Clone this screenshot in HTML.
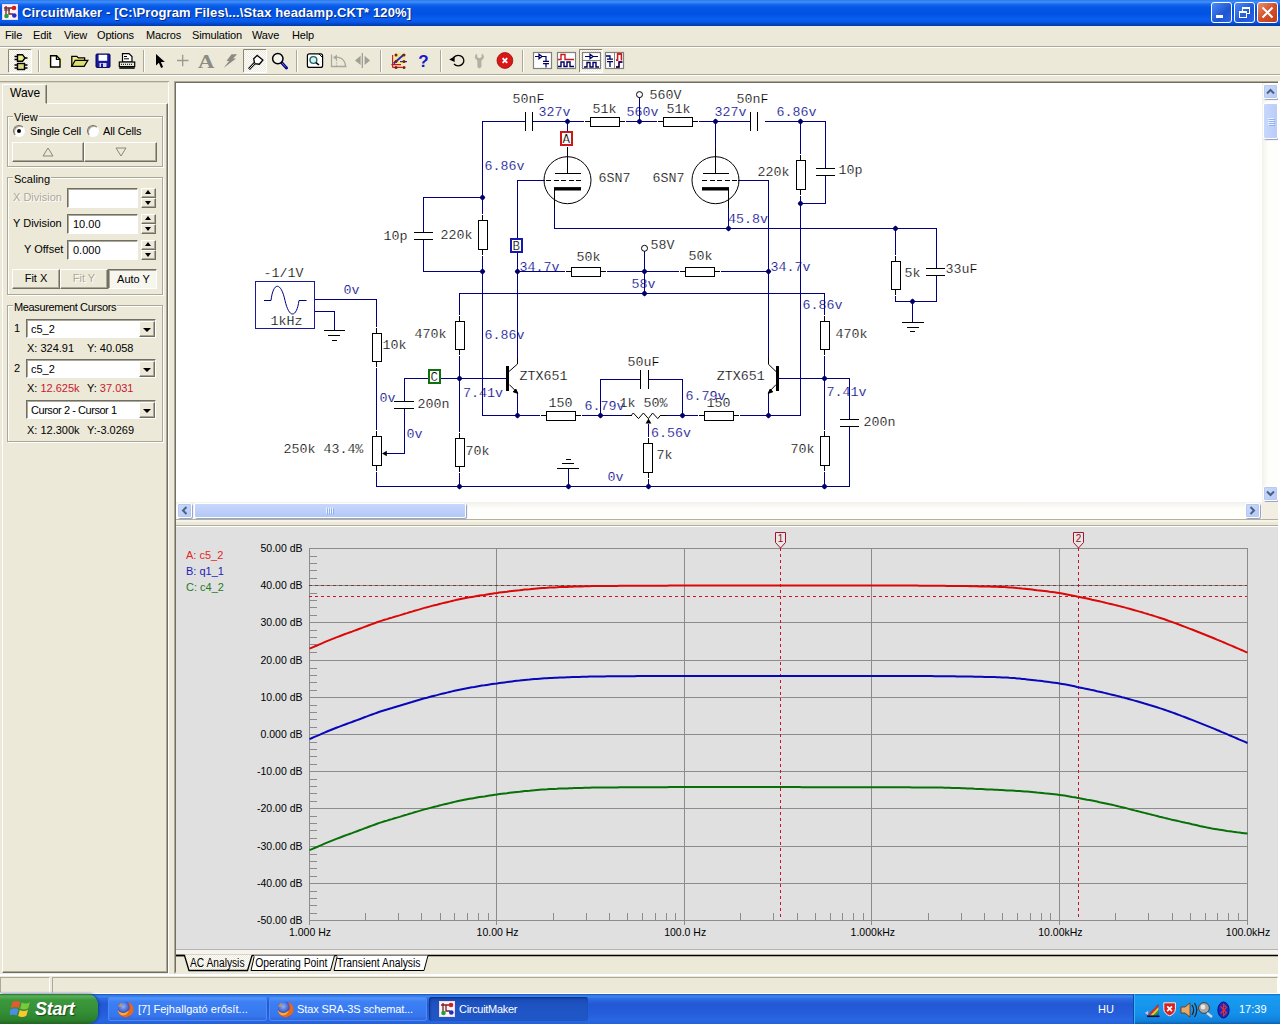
<!DOCTYPE html>
<html><head><meta charset="utf-8"><title>CircuitMaker</title>
<style>
*{box-sizing:border-box;margin:0;padding:0}
html,body{width:1280px;height:1024px;overflow:hidden;background:#ECE9D8;font-family:"Liberation Sans",sans-serif;font-size:11px;color:#000}
.abs{position:absolute}
#title{left:0;top:0;width:1280px;height:26px;background:linear-gradient(#2C78EE 0,#4090F8 2px,#1C6CEE 4px,#0558E6 7px,#0052E2 14px,#0C5EEE 19px,#0858E6 22px,#0346C4 24px,#023CA4 26px)}
#title .t{left:22px;top:5px;line-height:16px;font-weight:bold;font-size:13px;color:#fff;white-space:nowrap;text-shadow:1px 1px 0 #0A2A80;letter-spacing:.13px}
.cap{top:2px;width:21px;height:21px;border:1px solid #fff;border-radius:3px;background:linear-gradient(135deg,#4C8BF5,#1E55D4 60%,#2A66E4)}
#menu span{position:absolute;top:3px;font-size:11px;white-space:nowrap;letter-spacing:-.15px}
.sep{top:50px;width:2px;height:22px;border-left:1px solid #ACA899;border-right:1px solid #fff}
.tbp{top:49px;height:24px;background:#F6F5EE;border:1px solid;border-color:#8A8776 #fff #fff #8A8776}
.grp{border:1px solid #fff;box-shadow:-1px -1px 0 #ACA899, inset -1px -1px 0 #ACA899, inset 1px 1px 0 #fff, 1px 1px 0 #fff;border:0}
.grp{border:1px solid #ACA899;box-shadow:1px 1px 0 #fff, inset 1px 1px 0 #fff}
.lbl{position:absolute;white-space:nowrap;background:#ECE9D8;line-height:13px}
.txt{position:absolute;white-space:nowrap;line-height:13px}
.btn{position:absolute;background:#ECE9D8;border:1px solid;border-color:#fff #716F64 #716F64 #fff;box-shadow:inset -1px -1px 0 #ACA899;text-align:center;line-height:17px}
.inp{position:absolute;background:#fff;border:1px solid;border-color:#716F64 #fff #fff #716F64;box-shadow:inset 1px 1px 0 #ACA899}
.spin{position:absolute;width:15px}
.spin i{position:absolute;left:0;width:15px;height:10px;background:#ECE9D8;border:1px solid;border-color:#fff #716F64 #716F64 #fff;box-shadow:inset -1px -1px 0 #ACA899}
.spin i:after{content:"";position:absolute;left:3px;top:2px;border:3.5px solid transparent}
.spin i.u:after{border-bottom:4px solid #000;top:-2px}
.spin i.d:after{border-top:4px solid #000;top:2px}
.dd{position:absolute;width:16px;background:#ECE9D8;border:1px solid;border-color:#fff #716F64 #716F64 #fff;box-shadow:inset -1px -1px 0 #ACA899}
.dd:after{content:"";position:absolute;left:3px;top:6px;border:4px solid transparent;border-top:4px solid #000}
.tk{position:absolute;top:997px;height:24px;border-radius:3px;color:#fff;font-size:11px;line-height:24px;white-space:nowrap}

.sbtn{position:absolute;width:15px;height:15px;background:linear-gradient(135deg,#CADAFC,#B6CAF6);border:1px solid #fff;border-radius:2px;box-shadow:0 0 0 1px #B8C8EE inset, 1px 1px 1px #8E9CC0}
.thumb{position:absolute;background:linear-gradient(90deg,#C8D8FC,#BACCF8);border:1px solid #fff;border-radius:2px;box-shadow:1px 1px 1px #8E9CC0}
.thumbh{position:absolute;background:linear-gradient(#C8D8FC,#B4C8F6);border:1px solid #fff;border-radius:2px;box-shadow:1px 1px 1px #8E9CC0}
#left>.txt,#left>.lbl{margin-top:1px}
</style></head><body>
<!-- TITLE BAR -->
<div id="title" class="abs">
<svg class="abs" style="left:2px;top:4px" width="16" height="16" viewBox="0 0 16 16"><rect width="16" height="16" fill="#F4D8EC"/><rect x="1" y="1" width="14" height="14" fill="#fff" opacity=".7"/><path d="M2 4h8M4 2v9M7 4v6h4" stroke="#802020" stroke-width="1.3" fill="none"/><path d="M2 6h6" stroke="#404040" stroke-width="1"/><circle cx="12" cy="4" r="2.3" fill="#D02020"/><circle cx="12.3" cy="11.5" r="2.3" fill="#2030C0"/><circle cx="4.5" cy="12" r="2.3" fill="#20A040"/></svg>
<div class="abs t">CircuitMaker - [C:\Program Files\...\Stax headamp.CKT* 120%]</div>
<div class="abs cap" style="left:1211px"><div class="abs" style="left:4px;top:12px;width:7px;height:3px;background:#fff"></div></div>
<div class="abs cap" style="left:1234px"><div class="abs" style="left:7px;top:4px;width:8px;height:7px;border:1px solid #fff;border-top-width:2px"></div><div class="abs" style="left:4px;top:8px;width:8px;height:7px;border:1px solid #fff;border-top-width:2px;background:#2A62DC"></div></div>
<div class="abs cap" style="left:1257px;background:linear-gradient(135deg,#E8906C,#D4502C 50%,#C03A18)"><svg class="abs" style="left:0;top:0" width="19" height="19"><path d="M4.500 4.500l10 10M14.500 4.500l-10 10" stroke="#fff" stroke-width="2"/></svg></div>
</div>
<!-- MENU -->
<div id="menu" class="abs" style="left:0;top:26px;width:1280px;height:20px">
<span style="left:5px">File</span><span style="left:33px">Edit</span><span style="left:64px">View</span><span style="left:97px">Options</span><span style="left:146px">Macros</span><span style="left:192px">Simulation</span><span style="left:252px">Wave</span><span style="left:292px">Help</span>
</div>
<div class="abs" style="left:0;top:46px;width:1280px;height:1px;background:#ACA899"></div>
<div class="abs" style="left:0;top:47px;width:1280px;height:1px;background:#fff"></div>
<!-- TOOLBAR -->
<div id="toolbar"><svg class="abs" style="left:0;top:47px" width="640" height="27" viewBox="0 47 640 27" shape-rendering="auto">
<defs><pattern id="dith" width="2" height="2" patternUnits="userSpaceOnUse"><rect width="2" height="2" fill="#fff"/><rect width="1" height="1" fill="#ECE9D8"/><rect x="1" y="1" width="1" height="1" fill="#ECE9D8"/></pattern></defs>
<!-- pressed backgrounds -->
<g stroke-width="1">
<rect x="8.5" y="49.5" width="23" height="23" fill="url(#dith)" stroke="none"/><path d="M8.5 72.5V49.5H31.5" stroke="#8A8776" fill="none"/><path d="M31.5 49.5V72.5H8.5" stroke="#fff" fill="none"/>
<rect x="243.5" y="49.5" width="23" height="23" fill="url(#dith)" stroke="none"/><path d="M243.5 72.5V49.5H266.5" stroke="#8A8776" fill="none"/><path d="M266.5 49.5V72.5H243.5" stroke="#fff" fill="none"/>
<rect x="579.5" y="49.5" width="23" height="23" fill="url(#dith)" stroke="none"/><path d="M579.5 72.5V49.5H602.5" stroke="#8A8776" fill="none"/><path d="M602.5 49.5V72.5H579.5" stroke="#fff" fill="none"/>
</g>
<!-- separators -->
<g><path d="M38.5 50v22M143.5 50v22M296.5 50v22M380.5 50v22M440.5 50v22M522.5 50v22" stroke="#ACA899"/><path d="M39.5 50v22M144.5 50v22M297.5 50v22M381.5 50v22M441.5 50v22M523.5 50v22" stroke="#fff"/></g>
<!-- icon1: gate + IC -->
<g stroke="#000" stroke-width="1.4" fill="#EEEE88"><path d="M14.5 56.5h3M14.5 59.5h3M24 58h3.5M14.5 65h3M14.5 68h3M24.5 65h3M24.5 68h3"/><path d="M17.5 54.7h5l2.5 3.3l-2.5 3.2h-5z"/><rect x="17.5" y="63.5" width="7" height="6" fill="#DDDD88"/></g>
<!-- new -->
<g><circle cx="55" cy="61" r="7.5" fill="#F4F48A" opacity=".55"/><path d="M50.6 55.8h6l3.4 3.4v7.8h-9.4z" fill="#fff" stroke="#000" stroke-width="1.4"/><path d="M56.4 55.8v3.6h3.6" fill="none" stroke="#000" stroke-width="1.2"/></g>
<!-- open -->
<g stroke="#000" stroke-width="1.3"><path d="M71.8 66.3v-10h5l1.5 1.6h6.3v2.6" fill="#EEEE88"/><path d="M71.8 66.3l3.4-6h12.6l-3.6 6z" fill="#DDDD70"/></g>
<!-- save -->
<g><rect x="96" y="54" width="14" height="13.4" rx="1" fill="#1A1A9C" stroke="#000060" stroke-width="1"/><rect x="98.6" y="54.8" width="8.6" height="6" fill="#fff"/><rect x="99.5" y="63" width="7" height="4" fill="#D8D8E8"/><rect x="101" y="63.6" width="2" height="3.4" fill="#1A1A9C"/></g>
<!-- print -->
<g stroke="#000" stroke-width="1.2"><path d="M122.5 62v-8.4h6.5l3 3v5.4z" fill="#fff"/><rect x="119.3" y="62" width="15.4" height="4.6" fill="#E8E8D8"/><path d="M119.3 68h15.4" stroke-width="1.6"/><path d="M124 56.5h3M124 58.8h5" stroke-width="1"/><path d="M121 64.3h12" stroke-dasharray="1 1" stroke-width="1"/></g>
<!-- arrow -->
<path d="M156 54v11.6l2.9-2.8l2.2 5.2l2-.9l-2.2-5h4z" fill="#000"/>
<!-- plus -->
<path d="M177 60.5h11.5M182.7 54.8v11.4" stroke="#9A9A92" stroke-width="1.3"/>
<!-- A -->
<text transform="translate(198,67.5) scale(1.16,1)" font-family="Liberation Serif,serif" font-size="19.5" fill="#8C8C84" font-weight="bold">A</text>
<!-- lightning -->
<path d="M231.5 54.2h5.6l-4 4.2h3l-12.6 9.6l5.6-7h-2.6z" fill="#8C8C84"/>
<!-- probe -->
<g stroke="#000" stroke-width="1.3" fill="#fff"><path d="M257.3 55.4l5.6 4.6l-3.6 4.2l-4.6-.6l-1-4.8z"/><path d="M254.6 63.2l-5.6 6" stroke-width="2.6"/><path d="M254.4 63.4l-5 5.4" stroke="#fff" stroke-width=".9"/></g>
<!-- magnifier -->
<g><path d="M281.5 62.5l5 5.4" stroke="#000080" stroke-width="3" stroke-linecap="round"/><path d="M282 63l4 4.4" stroke="#6A6AE0" stroke-width="1"/><circle cx="277.8" cy="58.6" r="5.2" fill="#F4F4EC" stroke="#000" stroke-width="1.5"/></g>
<!-- zoom fit -->
<g><rect x="307.4" y="53.8" width="15.2" height="13.6" rx="2" fill="#fff" stroke="#000" stroke-width="1.2"/><path d="M319 54l3.4 3.4" stroke="#000" stroke-width="1"/><circle cx="313.4" cy="60" r="3.4" fill="#D8F0F0" stroke="#206868" stroke-width="1.4"/><path d="M316 62.6l3 2.4" stroke="#000" stroke-width="1.6"/></g>
<!-- rotate gray -->
<g stroke="#A8A89C" fill="none" stroke-width="1.3"><path d="M331.5 54.5v12h15"/><path d="M334 57.5c6 -1.5 11 2 11.5 8.6"/><path d="M333 57.6l4-3v5.6z" fill="#A8A89C" stroke="none"/><path d="M336.5 60v6" stroke-dasharray="1 1.4"/></g>
<!-- mirror gray -->
<g fill="#A0A096"><path d="M355 60.4l5.6-4.6v9.2z"/><path d="M370 60.4l-5.4-4.6v9.2z"/><rect x="361.7" y="53" width="1.3" height="15"/></g>
<!-- netlist -->
<g><circle cx="399" cy="59" r="6.5" fill="#F8E870" opacity=".6"/><path d="M392.6 55v12.4M391.4 64.6h9.6M392.6 67.4h10" stroke="#C81818" stroke-width="1.1" fill="none"/><path d="M393.6 63.4l10-8.6" stroke="#2828D0" stroke-width="2"/><path d="M400 61.6h7" stroke="#2828D0" stroke-width="1.2"/><g fill="#802000"><circle cx="396" cy="55" r="1.5"/><circle cx="404" cy="55" r="1.5"/><circle cx="396" cy="61.4" r="1.5"/><circle cx="404" cy="61.6" r="1.5"/><circle cx="396" cy="67.4" r="1.5"/><circle cx="404" cy="67.4" r="1.5"/></g></g>
<!-- ? -->
<text x="418.3" y="67" font-family="Liberation Sans,sans-serif" font-size="17" font-weight="bold" fill="#1818C8">?</text>
<!-- reset -->
<g><path d="M452.8 59.4a5.6 5.2 0 1 1 1.2 4.6" fill="none" stroke="#000" stroke-width="1.3"/><path d="M449.2 59.6l5.4-3v5.4z" fill="#000"/></g>
<!-- wrench gray -->
<g fill="#B0B0A4"><path d="M475.6 54.2l1.6 0v3l2.2 1l2.2-1v-3h1.6l.8 3.6l-2.6 3v6.2l-2 1.6l-2-1.6v-6.2l-2.6-3z"/></g>
<!-- stop -->
<g><circle cx="504.9" cy="60.5" r="7.9" fill="#D81818"/><circle cx="504.9" cy="60.5" r="7.9" fill="none" stroke="#A00808" stroke-width=".8"/><path d="M502.6 58.2l4.6 4.6M507.2 58.2l-4.6 4.6" stroke="#fff" stroke-width="1.9"/></g>
<!-- analysis icons -->
<g stroke-width="1.2" fill="none">
<rect x="533.5" y="52.5" width="18" height="16" fill="#fff" stroke="#808080"/><path d="M535 56.5h4M539 54.3v4.4l3-2.2zM542 56.5h4v5M543 61.3h6M543 63.6h6M546 63.6v4" stroke="#000060"/>
<rect x="557.5" y="52.5" width="18" height="16" fill="#fff" stroke="#808080"/><path d="M558 59.5h3v-5h4v5h9" stroke="#D01818" stroke-width="1.4"/><path d="M558 66.5h3v-4.5h3v4.5h3v-4.5h3v4.5h4" stroke="#000060" stroke-width="1.4"/>
<rect x="582.5" y="52.5" width="18" height="16" fill="#fff" stroke="#808080"/><path d="M582.5 60.5h18" stroke="#808080" stroke-width="1"/><path d="M585 56.5h5M590 54.3v4.4l3-2.2zM593 56.5h5" stroke="#000060"/><path d="M584 67h3v-4.5h3v4.5h3v-4.5h3v4.5h3" stroke="#000060" stroke-width="1.4"/>
<rect x="605.5" y="52.5" width="18" height="16" fill="#fff" stroke="#808080"/><path d="M614.5 52.5v16" stroke="#808080" stroke-width="1"/><path d="M606 56h4v3M607 59.2h6M607 61.6h6M610 61.6v5.5" stroke="#000060" stroke-width="1.3"/><path d="M616 60h1.5v-6h4v6M616 67h3v-5h3" stroke="#D01818" stroke-width="1.3"/><path d="M616 67h3v-5h3.5" stroke="#000060" stroke-width="1.3"/><path d="M616 60.4h1.6v-6.4h3.8v6.4" stroke="#D01818" stroke-width="1.3"/>
</g>
</svg>
</div>
<div class="abs" style="left:0;top:74px;width:1280px;height:1px;background:#ACA899"></div>
<div class="abs" style="left:0;top:75px;width:1280px;height:1px;background:#fff"></div>
<!-- LEFT PANEL -->
<div id="left"><div class="abs" style="left:0;top:81px;width:169px;height:1px;background:#A8A490"></div><div class="abs" style="left:0;top:82px;width:168px;height:1px;background:#D8D4C4"></div>
<div class="abs" style="left:168px;top:82px;width:1px;height:892px;background:#fff"></div>


<div class="abs" style="left:2px;top:103px;width:166px;height:870px;border:1px solid;border-color:#fff #716F64 #716F64 #fff;box-shadow:inset -1px -1px 0 #ACA899"></div>
<div class="abs" style="left:2px;top:84px;width:45px;height:20px;background:#ECE9D8;border:1px solid;border-color:#fff #716F64 #ECE9D8 #fff;box-shadow:inset -1px 0 0 #ACA899;border-radius:2px 2px 0 0"></div>
<div class="txt" style="left:10px;top:86px;font-size:12px">Wave</div>
<!-- View group -->
<div class="abs grp" style="left:7px;top:116px;width:156px;height:51px"></div>
<div class="lbl" style="left:13px;top:110px;padding:0 1px">View</div>
<div class="abs" style="left:13px;top:125px;width:12px;height:12px;border-radius:50%;background:#fff;border:1px solid;border-color:#716F64 #fff #fff #716F64;box-shadow:inset 1px 1px 0 #ACA899"></div>
<div class="abs" style="left:17px;top:129px;width:4px;height:4px;border-radius:50%;background:#000"></div>
<div class="txt" style="left:30px;top:124px;letter-spacing:-.15px">Single Cell</div>
<div class="abs" style="left:87px;top:125px;width:12px;height:12px;border-radius:50%;background:#fff;border:1px solid;border-color:#716F64 #fff #fff #716F64;box-shadow:inset 1px 1px 0 #ACA899"></div>
<div class="txt" style="left:103px;top:124px;letter-spacing:-.15px">All Cells</div>
<div class="btn" style="left:12px;top:142px;width:72px;height:20px"><svg width="12" height="10" style="margin-top:4px"><path d="M1 9L6 1l5 8z" fill="none" stroke="#8A8776"/></svg></div>
<div class="btn" style="left:84px;top:142px;width:73px;height:20px"><svg width="12" height="10" style="margin-top:4px"><path d="M1 1L6 9l5-8z" fill="none" stroke="#8A8776"/></svg></div>
<!-- Scaling group -->
<div class="abs grp" style="left:7px;top:177px;width:156px;height:118px"></div>
<div class="lbl" style="left:13px;top:172px;padding:0 1px">Scaling</div>
<div class="txt" style="left:13px;top:190px;color:#ACA899;text-shadow:1px 1px 0 #fff">X Division</div>
<div class="inp" style="left:67px;top:188px;width:71px;height:20px"></div>
<div class="spin" style="left:141px;top:188px"><i class="u" style="top:0"></i><i class="d" style="top:10px"></i></div>
<div class="txt" style="left:13px;top:216px">Y Division</div>
<div class="inp" style="left:67px;top:214px;width:71px;height:20px"><div class="txt" style="left:5px;top:3px">10.00</div></div>
<div class="spin" style="left:141px;top:214px"><i class="u" style="top:0"></i><i class="d" style="top:10px"></i></div>
<div class="txt" style="left:24px;top:242px">Y Offset</div>
<div class="inp" style="left:67px;top:240px;width:71px;height:20px"><div class="txt" style="left:5px;top:3px">0.000</div></div>
<div class="spin" style="left:141px;top:240px"><i class="u" style="top:0"></i><i class="d" style="top:10px"></i></div>
<div class="btn" style="left:12px;top:269px;width:48px;height:20px">Fit X</div>
<div class="btn" style="left:60px;top:269px;width:48px;height:20px;color:#ACA899;text-shadow:1px 1px 0 #fff">Fit Y</div>
<div class="btn" style="left:108px;top:269px;width:49px;height:20px;background:#F6F5EE;border-color:#716F64 #fff #fff #716F64;box-shadow:inset 1px 1px 0 #ACA899;line-height:19px;padding-left:2px">Auto Y</div>
<!-- Measurement Cursors -->
<div class="abs grp" style="left:7px;top:305px;width:156px;height:137px"></div>
<div class="lbl" style="left:13px;top:300px;padding:0 1px;letter-spacing:-.35px">Measurement Cursors</div>
<div class="txt" style="left:14px;top:321px">1</div>
<div class="inp" style="left:26px;top:319px;width:130px;height:19px"><div class="txt" style="left:4px;top:3px">c5_2</div><div class="dd" style="left:112px;top:1px;height:16px"></div></div>
<div class="txt" style="left:27px;top:341px">X: 324.91</div><div class="txt" style="left:87px;top:341px">Y: 40.058</div>
<div class="txt" style="left:14px;top:361px">2</div>
<div class="inp" style="left:26px;top:359px;width:130px;height:19px"><div class="txt" style="left:4px;top:3px">c5_2</div><div class="dd" style="left:112px;top:1px;height:16px"></div></div>
<div class="txt" style="left:27px;top:381px">X: <span style="color:#C81830">12.625k</span></div><div class="txt" style="left:87px;top:381px">Y: <span style="color:#C81830">37.031</span></div>
<div class="inp" style="left:26px;top:400px;width:130px;height:19px"><div class="txt" style="left:4px;top:3px;letter-spacing:-.45px">Cursor 2 - Cursor 1</div><div class="dd" style="left:112px;top:1px;height:16px"></div></div>
<div class="txt" style="left:27px;top:423px">X: 12.300k</div><div class="txt" style="left:87px;top:423px">Y:-3.0269</div>
</div>
<!-- SCHEMATIC -->
<div id="schem">
<div class="abs" style="left:174px;top:81px;width:1106px;height:893px;border:1px solid;border-color:#ACA899 #fff #ECE9D8 #ACA899"></div>
<div class="abs" style="left:175px;top:82px;width:1104px;height:891px;border:1px solid;border-color:#716F64 #ECE9D8 #ECE9D8 #716F64"></div>
<div class="abs" style="left:176px;top:83px;width:1102px;height:436px;background:#fff"></div>
<div class="abs" style="left:176px;top:519px;width:1102px;height:8px;background:linear-gradient(#B4B0A0 0,#B4B0A0 1px,#F8F6EC 1px,#F4F2E6 3px,#ECE9D8 3px,#ECE9D8 6px,#B0AC98 6px,#B0AC98 7px,#fff 7px)"></div>
<!-- vscroll -->
<div class="abs" style="left:1262px;top:83px;width:16px;height:419px;background:linear-gradient(90deg,#F3F1EC,#FEFEFB 40%,#FEFEFB)"></div>
<div class="sbtn" style="left:1263px;top:84px"><svg width="13" height="13"><path d="M3 8.5l3.5-3.5l3.5 3.5" fill="none" stroke="#4D6185" stroke-width="2"/></svg></div>
<div class="thumb" style="left:1263px;top:103px;width:15px;height:36px"><svg width="13" height="34"><path d="M4 14.5h6M4 16.5h6M4 18.5h6M4 20.5h6" stroke="#EEF4FE"/><path d="M5 15.5h6M5 17.5h6M5 19.5h6M5 21.5h6" stroke="#8CB0F8"/></svg></div>
<div class="sbtn" style="left:1263px;top:486px"><svg width="13" height="13"><path d="M3 4.5l3.5 3.5l3.5-3.5" fill="none" stroke="#4D6185" stroke-width="2"/></svg></div>
<!-- hscroll -->
<div class="abs" style="left:176px;top:502px;width:1086px;height:17px;background:linear-gradient(#F3F1EC,#FEFEFB 40%,#FEFEFB)"></div>
<div class="abs" style="left:1262px;top:502px;width:16px;height:17px;background:#F2EFE2"></div>
<div class="sbtn" style="left:177px;top:503px"><svg width="13" height="13"><path d="M8.5 3l-3.5 3.5l3.5 3.5" fill="none" stroke="#4D6185" stroke-width="2"/></svg></div>
<div class="thumbh" style="left:194px;top:503px;width:272px;height:15px"><svg width="270" height="13"><path d="M131.5 3.5v6M133.5 3.5v6M135.5 3.5v6M137.5 3.5v6" stroke="#EEF4FE"/><path d="M132.5 4.5v6M134.5 4.5v6M136.5 4.5v6M138.5 4.5v6" stroke="#8CB0F8"/></svg></div>
<div class="sbtn" style="left:1245px;top:503px"><svg width="13" height="13"><path d="M4.5 3l3.5 3.5l-3.5 3.5" fill="none" stroke="#4D6185" stroke-width="2"/></svg></div>
<svg class="abs" style="left:176px;top:83px" width="1086" height="420" viewBox="176 83 1086 420"><style>.k{font-family:"Liberation Mono",monospace;font-size:13.33px;fill:#000;stroke:#fff;stroke-width:.22px}.v{font-family:"Liberation Mono",monospace;font-size:13.33px;fill:#00008C;stroke:#fff;stroke-width:.2px}</style><text x="512.4" y="103" class="k">50nF</text>
<text x="592.4" y="113" class="k">51k</text>
<text x="649.4" y="99" class="k">560V</text>
<text x="666.4" y="113" class="k">51k</text>
<text x="736.4" y="103" class="k">50nF</text>
<text x="598.4" y="182" class="k">6SN7</text>
<text x="652.4" y="182" class="k">6SN7</text>
<text x="757.4" y="176" class="k">220k</text>
<text x="838.4" y="174" class="k">10p</text>
<text x="383.4" y="240" class="k">10p</text>
<text x="440.4" y="239" class="k">220k</text>
<text x="576.4" y="261" class="k">50k</text>
<text x="650.4" y="249" class="k">58V</text>
<text x="688.4" y="260" class="k">50k</text>
<text x="904.4" y="277" class="k">5k</text>
<text x="945.4" y="273" class="k">33uF</text>
<text x="263.4" y="277" class="k">-1/1V</text>
<text x="270.4" y="325" class="k">1kHz</text>
<text x="382.4" y="349" class="k">10k</text>
<text x="414.4" y="338" class="k">470k</text>
<text x="835.4" y="338" class="k">470k</text>
<text x="519.4" y="380" class="k">ZTX651</text>
<text x="716.8" y="380" class="k">ZTX651</text>
<text x="627.4" y="366" class="k">50uF</text>
<text x="548.4" y="407" class="k">150</text>
<text x="706.4" y="407" class="k">150</text>
<text x="619.4" y="407" class="k">1k 50%</text>
<text x="417.4" y="408" class="k">200n</text>
<text x="863.4" y="426" class="k">200n</text>
<text x="283.4" y="453" class="k">250k 43.4%</text>
<text x="465.4" y="455" class="k">70k</text>
<text x="790.4" y="453" class="k">70k</text>
<text x="656.4" y="459" class="k">7k</text>
<text x="538.4" y="115.5" class="v">327v</text>
<text x="626.4" y="115.5" class="v">560v</text>
<text x="714.4" y="115.5" class="v">327v</text>
<text x="776.4" y="115.5" class="v">6.86v</text>
<text x="484.4" y="169.5" class="v">6.86v</text>
<text x="727.9" y="223" class="v">45.8v</text>
<text x="519.4" y="271" class="v">34.7v</text>
<text x="770.4" y="271.3" class="v">34.7v</text>
<text x="631.4" y="287.5" class="v">58v</text>
<text x="802.4" y="308.6" class="v">6.86v</text>
<text x="484.4" y="338.5" class="v">6.86v</text>
<text x="343.4" y="294" class="v">0v</text>
<text x="379.4" y="402" class="v">0v</text>
<text x="406.4" y="437.6" class="v">0v</text>
<text x="462.9" y="397" class="v">7.41v</text>
<text x="826.4" y="396" class="v">7.41v</text>
<text x="584.4" y="410" class="v">6.79v</text>
<text x="685.4" y="400.3" class="v">6.79v</text>
<text x="650.9" y="437.2" class="v">6.56v</text>
<text x="607.4" y="481.2" class="v">0v</text><g stroke="#000080" stroke-width="1" fill="none" shape-rendering="crispEdges">
<path d="M482 121.5H526"/>
<path d="M533 121.5H591"/>
<path d="M620 121.5H664"/>
<path d="M693 121.5H751"/>
<path d="M765 121.5H826"/>
<path d="M423 197.5H483"/>
<path d="M423 271.5H483"/>
<path d="M517 180.5H545"/>
<path d="M738 180.5H769"/>
<path d="M554 228.5H937"/>
<path d="M517 271.5H572"/>
<path d="M601 271.5H686"/>
<path d="M715 271.5H769"/>
<path d="M459 293.5H825"/>
<path d="M315 299.5H377"/>
<path d="M315 311.5H335"/>
<path d="M404 378.5H429"/>
<path d="M441 378.5H507"/>
<path d="M779 378.5H850"/>
<path d="M482 415.5H546"/>
<path d="M575 415.5H632"/>
<path d="M660 415.5H705"/>
<path d="M734 415.5H801"/>
<path d="M600 379.5H641"/>
<path d="M648 379.5H683"/>
<path d="M386 453.5H405"/>
<path d="M376 486.5H850"/>
<path d="M800 203.5H826"/>
<path d="M895 301.5H937"/>
<path d="M482.5 121V221"/>
<path d="M482.5 250V416"/>
<path d="M423.5 197V233"/>
<path d="M423.5 239V272"/>
<path d="M517.5 180V239"/>
<path d="M517.5 253V359"/>
<path d="M567.5 121V132"/>
<path d="M567.5 147V174"/>
<path d="M554.5 190V229"/>
<path d="M639.5 97V122"/>
<path d="M715.5 121V174"/>
<path d="M728.5 190V229"/>
<path d="M768.5 180V358"/>
<path d="M800.5 121V161"/>
<path d="M800.5 190V416"/>
<path d="M825.5 121V169"/>
<path d="M825.5 175V204"/>
<path d="M644.5 251V294"/>
<path d="M895.5 228V262"/>
<path d="M895.5 290V302"/>
<path d="M936.5 228V269"/>
<path d="M936.5 275V302"/>
<path d="M912.5 301V323"/>
<path d="M824.5 293V322"/>
<path d="M824.5 350V437"/>
<path d="M824.5 466V487"/>
<path d="M849.5 378V420"/>
<path d="M849.5 426V487"/>
<path d="M376.5 299V334"/>
<path d="M376.5 362V436"/>
<path d="M376.5 466V487"/>
<path d="M334.5 311V331"/>
<path d="M404.5 378V402"/>
<path d="M404.5 408V454"/>
<path d="M459.5 293V322"/>
<path d="M459.5 350V439"/>
<path d="M459.5 468V487"/>
<path d="M600.5 379V416"/>
<path d="M682.5 379V416"/>
<path d="M648.5 424V444"/>
<path d="M648.5 473V487"/>
<path d="M568.5 468V487"/>
<path d="M517.5 393V416"/>
<path d="M768.5 393V416"/>
</g>
<g fill="#00006C">
<path d="M567.5 118.6l2.9 2.9l-2.9 2.9l-2.9-2.9z"/><circle cx="567.5" cy="121.5" r="2.2"/>
<path d="M639.5 118.6l2.9 2.9l-2.9 2.9l-2.9-2.9z"/><circle cx="639.5" cy="121.5" r="2.2"/>
<path d="M715.5 118.6l2.9 2.9l-2.9 2.9l-2.9-2.9z"/><circle cx="715.5" cy="121.5" r="2.2"/>
<path d="M800.5 118.6l2.9 2.9l-2.9 2.9l-2.9-2.9z"/><circle cx="800.5" cy="121.5" r="2.2"/>
<path d="M482.5 194.6l2.9 2.9l-2.9 2.9l-2.9-2.9z"/><circle cx="482.5" cy="197.5" r="2.2"/>
<path d="M482.5 268.6l2.9 2.9l-2.9 2.9l-2.9-2.9z"/><circle cx="482.5" cy="271.5" r="2.2"/>
<path d="M517.5 268.6l2.9 2.9l-2.9 2.9l-2.9-2.9z"/><circle cx="517.5" cy="271.5" r="2.2"/>
<path d="M644.5 268.6l2.9 2.9l-2.9 2.9l-2.9-2.9z"/><circle cx="644.5" cy="271.5" r="2.2"/>
<path d="M768.5 268.6l2.9 2.9l-2.9 2.9l-2.9-2.9z"/><circle cx="768.5" cy="271.5" r="2.2"/>
<path d="M728.5 225.6l2.9 2.9l-2.9 2.9l-2.9-2.9z"/><circle cx="728.5" cy="228.5" r="2.2"/>
<path d="M895.5 225.6l2.9 2.9l-2.9 2.9l-2.9-2.9z"/><circle cx="895.5" cy="228.5" r="2.2"/>
<path d="M800.5 200.6l2.9 2.9l-2.9 2.9l-2.9-2.9z"/><circle cx="800.5" cy="203.5" r="2.2"/>
<path d="M912.5 298.6l2.9 2.9l-2.9 2.9l-2.9-2.9z"/><circle cx="912.5" cy="301.5" r="2.2"/>
<path d="M644.5 290.6l2.9 2.9l-2.9 2.9l-2.9-2.9z"/><circle cx="644.5" cy="293.5" r="2.2"/>
<path d="M459.5 375.6l2.9 2.9l-2.9 2.9l-2.9-2.9z"/><circle cx="459.5" cy="378.5" r="2.2"/>
<path d="M824.5 375.6l2.9 2.9l-2.9 2.9l-2.9-2.9z"/><circle cx="824.5" cy="378.5" r="2.2"/>
<path d="M517.5 412.6l2.9 2.9l-2.9 2.9l-2.9-2.9z"/><circle cx="517.5" cy="415.5" r="2.2"/>
<path d="M600.5 412.6l2.9 2.9l-2.9 2.9l-2.9-2.9z"/><circle cx="600.5" cy="415.5" r="2.2"/>
<path d="M682.5 412.6l2.9 2.9l-2.9 2.9l-2.9-2.9z"/><circle cx="682.5" cy="415.5" r="2.2"/>
<path d="M768.5 412.6l2.9 2.9l-2.9 2.9l-2.9-2.9z"/><circle cx="768.5" cy="415.5" r="2.2"/>
<path d="M459.5 483.6l2.9 2.9l-2.9 2.9l-2.9-2.9z"/><circle cx="459.5" cy="486.5" r="2.2"/>
<path d="M568.5 483.6l2.9 2.9l-2.9 2.9l-2.9-2.9z"/><circle cx="568.5" cy="486.5" r="2.2"/>
<path d="M648.5 483.6l2.9 2.9l-2.9 2.9l-2.9-2.9z"/><circle cx="648.5" cy="486.5" r="2.2"/>
<path d="M824.5 483.6l2.9 2.9l-2.9 2.9l-2.9-2.9z"/><circle cx="824.5" cy="486.5" r="2.2"/>
</g>
<g stroke="#000" stroke-width="1" fill="#fff" shape-rendering="crispEdges">
<path d="M585 121.5H590M620 121.5H625" fill="none"/><path d="M584 121.5H585M625 121.5H626" stroke="#fff" fill="none"/><rect x="590.5" y="117.5" width="29" height="9"/>
<path d="M658 121.5H663M693 121.5H698" fill="none"/><path d="M657 121.5H658M698 121.5H699" stroke="#fff" fill="none"/><rect x="663.5" y="117.5" width="29" height="9"/>
<path d="M566 271.5H571M601 271.5H606" fill="none"/><path d="M565 271.5H566M606 271.5H607" stroke="#fff" fill="none"/><rect x="571.5" y="267.5" width="29" height="9"/>
<path d="M680 271.5H685M715 271.5H720" fill="none"/><path d="M679 271.5H680M720 271.5H721" stroke="#fff" fill="none"/><rect x="685.5" y="267.5" width="29" height="9"/>
<path d="M541 415.5H546M576 415.5H581" fill="none"/><path d="M540 415.5H541M581 415.5H582" stroke="#fff" fill="none"/><rect x="546.5" y="411.5" width="29" height="9"/>
<path d="M699 415.5H704M734 415.5H739" fill="none"/><path d="M698 415.5H699M739 415.5H740" stroke="#fff" fill="none"/><rect x="704.5" y="411.5" width="29" height="9"/>
<path d="M482.5 215V220M482.5 250V255" fill="none"/><path d="M482.5 214V215M482.5 255V256" stroke="#fff" fill="none"/><rect x="478.5" y="220.5" width="9" height="29"/>
<path d="M800.5 155V160M800.5 190V195" fill="none"/><path d="M800.5 154V155M800.5 195V196" stroke="#fff" fill="none"/><rect x="796.5" y="160.5" width="9" height="29"/>
<path d="M895.5 256V261M895.5 290V295" fill="none"/><path d="M895.5 255V256M895.5 295V296" stroke="#fff" fill="none"/><rect x="891.5" y="261.5" width="9" height="28"/>
<path d="M459.5 316V321M459.5 350V355" fill="none"/><path d="M459.5 315V316M459.5 355V356" stroke="#fff" fill="none"/><rect x="455.5" y="321.5" width="9" height="28"/>
<path d="M824.5 316V321M824.5 350V355" fill="none"/><path d="M824.5 315V316M824.5 355V356" stroke="#fff" fill="none"/><rect x="820.5" y="321.5" width="9" height="28"/>
<path d="M459.5 433V438M459.5 467V472" fill="none"/><path d="M459.5 432V433M459.5 472V473" stroke="#fff" fill="none"/><rect x="455.5" y="438.5" width="9" height="28"/>
<path d="M824.5 431V436M824.5 466V471" fill="none"/><path d="M824.5 430V431M824.5 471V472" stroke="#fff" fill="none"/><rect x="820.5" y="436.5" width="9" height="29"/>
<path d="M376.5 328V333M376.5 362V367" fill="none"/><path d="M376.5 327V328M376.5 367V368" stroke="#fff" fill="none"/><rect x="372.5" y="333.5" width="9" height="28"/>
<path d="M376.5 431V436M376.5 466V471" fill="none"/><path d="M376.5 430V431M376.5 471V472" stroke="#fff" fill="none"/><rect x="372.5" y="436.5" width="9" height="29"/>
<path d="M648.5 438V443M648.5 473V478" fill="none"/><path d="M648.5 437V438M648.5 478V479" stroke="#fff" fill="none"/><rect x="643.5" y="443.5" width="9" height="29"/>
<path d="M525.5 112V131M532.5 112V131" fill="none"/>
<path d="M750.5 112V131M757.5 112V131" fill="none"/>
<path d="M640.5 370V389M648.5 370V389" fill="none"/>
<path d="M414 232.5H433M414 239.5H433" fill="none"/>
<path d="M816 168.5H835M816 175.5H835" fill="none"/>
<path d="M926 268.5H945M926 275.5H945" fill="none"/>
<path d="M394 401.5H414M394 408.5H414" fill="none"/>
<path d="M840 419.5H859M840 426.5H859" fill="none"/>
<path d="M324 330.5H345M328 335.5H340M332 340.5H337" fill="none"/>
<path d="M902 322.5H924M907 327.5H919M910 331.5H915" fill="none"/>
<path d="M557 468.5H579M562 463.5H574M566 459.5H571" fill="none"/>
</g>
<circle cx="567.5" cy="180.2" r="23.5" fill="none" stroke="#000" stroke-width="1"/><path d="M567.5 148V173.5M554.5 173.5H580.5" stroke="#000" fill="none" shape-rendering="crispEdges"/><path d="M581 180.5H544" stroke="#000" stroke-dasharray="5 2.5" fill="none" shape-rendering="crispEdges"/><path d="M554.5 190V208" stroke="#000" fill="none" shape-rendering="crispEdges"/><path d="M554 188.8H581" stroke="#000" stroke-width="3.4" fill="none"/>
<circle cx="715.5" cy="180.2" r="23.5" fill="none" stroke="#000" stroke-width="1"/><path d="M715.5 148V173.5M702.5 173.5H728.5" stroke="#000" fill="none" shape-rendering="crispEdges"/><path d="M702 180.5H738" stroke="#000" stroke-dasharray="5 2.5" fill="none" shape-rendering="crispEdges"/><path d="M728.5 190V208" stroke="#000" fill="none" shape-rendering="crispEdges"/><path d="M702 188.8H729" stroke="#000" stroke-width="3.4" fill="none"/>
<g stroke="#000" fill="#fff"><circle cx="639.5" cy="94.6" r="3"/><circle cx="644.5" cy="248.3" r="3"/></g>
<g stroke="#000" fill="none"><path d="M507.5 366V391" stroke-width="3"/><path d="M509 371.5L517.5 364V358"/><path d="M509.3 384.6L517.5 392.8"/><path d="M517.8 393.4l-4.6-1.6l2.6-2.8z" fill="#000"/>
<path d="M777.500 366V391" stroke-width="3"/><path d="M776 371.500L768.500 364.300V357"/><path d="M776 384.600L768.500 392.500"/><path d="M768.2 393.4l4.6-1.6l-2.6-2.8z" fill="#000"/></g>
<path d="M625 415.500H631.200L633.300 413L638.500 418.600L643.400 413L648.400 418.600L652.600 413L657.800 418.600L660.300 415.500H666" stroke="#000" fill="none"/>
<path d="M648.500 418.400l-2.900 5.200h5.800z" fill="#000"/>
<path d="M382 453.5l4.800-2.800v5.600z" fill="#000"/>
<rect x="255.5" y="281.5" width="59" height="47" fill="none" stroke="#1A1A9A" shape-rendering="crispEdges"/>
<path d="M264 300.5h7c2.2-19 10-19 14 0c4 18 11.500 18 14 0h7.500" fill="none" stroke="#000080" stroke-width="1"/>
<rect x="561" y="132" width="11" height="13" fill="#fff" stroke="#CC1818" stroke-width="2"/><text x="562.4" y="143" class="k" style="font-size:12.5px">A</text>
<rect x="511" y="239" width="11" height="13" fill="#fff" stroke="#1818B0" stroke-width="2"/><text x="512.4" y="250" class="k" style="font-size:12.5px">B</text>
<rect x="429" y="370" width="11" height="13" fill="#fff" stroke="#107010" stroke-width="2"/><text x="430.4" y="381" class="k" style="font-size:12.5px">C</text></svg></div>
<!-- PLOT -->
<div id="plot">

<svg class="abs" style="left:176px;top:527px" width="1102" height="428" viewBox="176 527 1102 428" font-family="Liberation Sans,sans-serif" font-size="10.5"><rect x="176" y="527" width="1102" height="423" fill="#E0E0E0"/><rect x="176" y="949" width="1102" height="1" fill="#B4B4B4"/><rect x="176" y="950" width="1102" height="4.500" fill="#F6F4EC"/>
<path d="M309 548.5H1248M309 585.5H1248M309 622.5H1248M309 660.5H1248M309 697.5H1248M309 734.5H1248M309 771.5H1248M309 808.5H1248M309 846.5H1248M309 883.5H1248M309 920.5H1248M309.5 548V925M496.5 548V925M684.5 548V925M871.5 548V925M1059.5 548V925M1247.5 548V925" stroke="#8C8C8C" fill="none" shape-rendering="crispEdges"/>
<path d="M310 556.5h7M310 563.5h7M310 570.5h7M310 578.5h7M310 593.5h7M310 600.5h7M310 607.5h7M310 615.5h7M310 630.5h7M310 637.5h7M310 644.5h7M310 652.5h7M310 668.5h7M310 675.5h7M310 682.5h7M310 690.5h7M310 705.5h7M310 712.5h7M310 719.5h7M310 727.5h7M310 742.5h7M310 749.5h7M310 756.5h7M310 764.5h7M310 779.5h7M310 786.5h7M310 793.5h7M310 801.5h7M310 816.5h7M310 823.5h7M310 830.5h7M310 838.5h7M310 854.5h7M310 861.5h7M310 868.5h7M310 876.5h7M310 891.5h7M310 898.5h7M310 905.5h7M310 913.5h7M365.5 920v-7M398.5 920v-7M421.5 920v-7M440.5 920v-7M454.5 920v-7M467.5 920v-7M478.5 920v-7M488.5 920v-7M553.5 920v-7M586.5 920v-7M609.5 920v-7M627.5 920v-7M642.5 920v-7M655.5 920v-7M666.5 920v-7M675.5 920v-7M740.5 920v-7M773.5 920v-7M797.5 920v-7M815.5 920v-7M830.5 920v-7M842.5 920v-7M853.5 920v-7M863.5 920v-7M928.5 920v-7M961.5 920v-7M984.5 920v-7M1002.5 920v-7M1017.5 920v-7M1030.5 920v-7M1041.5 920v-7M1050.5 920v-7M1115.5 920v-7M1148.5 920v-7M1172.5 920v-7M1190.5 920v-7M1205.5 920v-7M1217.5 920v-7M1228.5 920v-7M1238.5 920v-7" stroke="#8C8C8C" fill="none" shape-rendering="crispEdges"/>
<g stroke="#CC1428" stroke-dasharray="3 3" fill="none" shape-rendering="crispEdges"><path d="M309 596.5H1247"/><path d="M780.5 548V920M1078.5 548V920"/><path d="M309 585.5H1247" stroke="#7A3838"/></g>
<path d="M775.5 532.5h10v10l-5 5.500l-5-5.500z" fill="#E9E6E6" stroke="#A81030"/><text x="780.5" y="542.4" text-anchor="middle" font-size="10" fill="#901020">1</text>
<path d="M1073.5 532.5h10v10l-5 5.500l-5-5.500z" fill="#E9E6E6" stroke="#A81030"/><text x="1078.5" y="542.4" text-anchor="middle" font-size="10" fill="#901020">2</text>
<path d="M309.5 648.7 312.0 647.6 314.5 646.5 317.0 645.5 319.5 644.4 322.0 643.3 324.5 642.2 327.0 641.1 329.5 640.1 332.0 639.1 334.5 638.1 337.0 637.1 339.5 636.2 342.0 635.2 344.5 634.3 347.0 633.4 349.5 632.5 352.0 631.6 354.5 630.6 357.0 629.7 359.5 628.8 362.0 627.9 364.5 626.9 367.0 626.0 369.5 625.0 372.0 624.1 374.5 623.2 377.0 622.3 379.5 621.4 382.0 620.6 384.5 619.8 387.0 619.1 389.5 618.3 392.0 617.6 394.5 616.8 397.0 616.1 399.5 615.4 402.0 614.6 404.5 613.8 407.0 613.1 409.5 612.3 412.0 611.6 414.5 610.8 417.0 610.1 419.5 609.4 422.0 608.6 424.5 607.9 427.0 607.3 429.5 606.6 432.0 605.9 434.5 605.3 437.0 604.7 439.5 604.0 442.0 603.4 444.5 602.8 447.0 602.2 449.5 601.6 452.0 601.0 454.5 600.4 457.0 599.8 459.5 599.3 462.0 598.8 464.5 598.3 467.0 597.8 469.5 597.3 472.0 596.9 474.5 596.5 477.0 596.0 479.5 595.6 482.0 595.2 484.5 594.9 487.0 594.5 489.5 594.1 492.0 593.7 494.5 593.3 497.0 593.0 499.5 592.6 502.0 592.3 504.5 592.0 507.0 591.7 509.5 591.3 512.0 591.0 514.5 590.7 517.0 590.4 519.5 590.2 522.0 589.9 524.5 589.6 527.0 589.4 529.5 589.2 532.0 588.9 534.5 588.7 537.0 588.5 539.5 588.3 542.0 588.1 544.5 587.9 547.0 587.8 549.5 587.6 552.0 587.5 554.5 587.4 557.0 587.3 559.5 587.1 562.0 587.0 564.5 587.0 567.0 586.9 569.5 586.8 572.0 586.7 574.5 586.6 577.0 586.5 579.5 586.5 582.0 586.4 584.5 586.3 587.0 586.3 589.5 586.2 592.0 586.1 594.5 586.1 597.0 586.0 599.5 586.0 602.0 586.0 604.5 586.0 607.0 585.9 609.5 585.9 612.0 585.9 614.5 585.9 617.0 585.9 619.5 585.8 622.0 585.8 624.5 585.8 627.0 585.8 629.5 585.8 632.0 585.8 634.5 585.8 637.0 585.7 639.5 585.7 642.0 585.7 644.5 585.7 647.0 585.7 649.5 585.7 652.0 585.7 654.5 585.7 657.0 585.7 659.5 585.7 662.0 585.7 664.5 585.7 667.0 585.7 669.5 585.6 672.0 585.6 674.5 585.6 677.0 585.6 679.5 585.6 682.0 585.6 684.5 585.6 687.0 585.6 689.5 585.6 692.0 585.6 694.5 585.6 697.0 585.6 699.5 585.6 702.0 585.6 704.5 585.6 707.0 585.6 709.5 585.6 712.0 585.6 714.5 585.6 717.0 585.6 719.5 585.6 722.0 585.6 724.5 585.6 727.0 585.6 729.5 585.6 732.0 585.6 734.5 585.6 737.0 585.6 739.5 585.6 742.0 585.6 744.5 585.6 747.0 585.6 749.5 585.6 752.0 585.6 754.5 585.6 757.0 585.6 759.5 585.6 762.0 585.6 764.5 585.6 767.0 585.6 769.5 585.6 772.0 585.6 774.5 585.6 777.0 585.6 779.5 585.6 782.0 585.6 784.5 585.6 787.0 585.6 789.5 585.6 792.0 585.6 794.5 585.6 797.0 585.6 799.5 585.6 802.0 585.6 804.5 585.6 807.0 585.6 809.5 585.6 812.0 585.6 814.5 585.6 817.0 585.6 819.5 585.6 822.0 585.6 824.5 585.6 827.0 585.6 829.5 585.6 832.0 585.6 834.5 585.6 837.0 585.6 839.5 585.6 842.0 585.6 844.5 585.6 847.0 585.6 849.5 585.6 852.0 585.6 854.5 585.6 857.0 585.6 859.5 585.6 862.0 585.6 864.5 585.6 867.0 585.6 869.5 585.6 872.0 585.6 874.5 585.6 877.0 585.6 879.5 585.6 882.0 585.6 884.5 585.6 887.0 585.6 889.5 585.6 892.0 585.6 894.5 585.6 897.0 585.6 899.5 585.6 902.0 585.6 904.5 585.6 907.0 585.6 909.5 585.6 912.0 585.6 914.5 585.6 917.0 585.6 919.5 585.7 922.0 585.7 924.5 585.7 927.0 585.7 929.5 585.7 932.0 585.7 934.5 585.8 937.0 585.8 939.5 585.8 942.0 585.8 944.5 585.8 947.0 585.9 949.5 585.9 952.0 585.9 954.5 585.9 957.0 586.0 959.5 586.0 962.0 586.0 964.5 586.1 967.0 586.1 969.5 586.2 972.0 586.2 974.5 586.3 977.0 586.3 979.5 586.4 982.0 586.4 984.5 586.5 987.0 586.5 989.5 586.6 992.0 586.7 994.5 586.7 997.0 586.8 999.5 586.9 1002.0 587.0 1004.5 587.1 1007.0 587.2 1009.5 587.4 1012.0 587.5 1014.5 587.7 1017.0 588.0 1019.5 588.2 1022.0 588.5 1024.5 588.7 1027.0 589.0 1029.5 589.3 1032.0 589.6 1034.5 589.9 1037.0 590.2 1039.5 590.4 1042.0 590.7 1044.5 591.0 1047.0 591.3 1049.5 591.7 1052.0 592.0 1054.5 592.3 1057.0 592.7 1059.5 593.1 1062.0 593.5 1064.5 593.9 1067.0 594.4 1069.5 594.9 1072.0 595.4 1074.5 595.9 1077.0 596.5 1079.5 597.0 1082.0 597.5 1084.5 598.1 1087.0 598.6 1089.5 599.1 1092.0 599.7 1094.5 600.2 1097.0 600.8 1099.5 601.3 1102.0 601.9 1104.5 602.5 1107.0 603.1 1109.5 603.7 1112.0 604.3 1114.5 604.9 1117.0 605.5 1119.5 606.1 1122.0 606.8 1124.5 607.4 1127.0 608.1 1129.5 608.8 1132.0 609.5 1134.5 610.2 1137.0 610.9 1139.5 611.6 1142.0 612.3 1144.5 613.1 1147.0 613.8 1149.5 614.6 1152.0 615.3 1154.5 616.1 1157.0 616.9 1159.5 617.7 1162.0 618.5 1164.5 619.3 1167.0 620.2 1169.5 621.1 1172.0 622.0 1174.5 622.9 1177.0 623.8 1179.5 624.7 1182.0 625.7 1184.5 626.6 1187.0 627.6 1189.5 628.6 1192.0 629.5 1194.5 630.5 1197.0 631.5 1199.5 632.5 1202.0 633.5 1204.5 634.5 1207.0 635.5 1209.5 636.5 1212.0 637.5 1214.5 638.5 1217.0 639.6 1219.5 640.6 1222.0 641.7 1224.5 642.7 1227.0 643.8 1229.5 644.9 1232.0 645.9 1234.5 647.0 1237.0 648.1 1239.5 649.2 1242.0 650.2 1244.5 651.3 1247.5 652.6" stroke="#DC0808" stroke-width="2" fill="none"/>
<path d="M309.5 739.1 312.0 738.0 314.5 736.9 317.0 735.9 319.5 734.8 322.0 733.7 324.5 732.6 327.0 731.5 329.5 730.5 332.0 729.5 334.5 728.5 337.0 727.5 339.5 726.6 342.0 725.6 344.5 724.7 347.0 723.8 349.5 722.9 352.0 722.0 354.5 721.0 357.0 720.1 359.5 719.2 362.0 718.3 364.5 717.3 367.0 716.4 369.5 715.4 372.0 714.5 374.5 713.6 377.0 712.7 379.5 711.8 382.0 711.0 384.5 710.2 387.0 709.5 389.5 708.7 392.0 708.0 394.5 707.2 397.0 706.5 399.5 705.8 402.0 705.0 404.5 704.2 407.0 703.5 409.5 702.7 412.0 702.0 414.5 701.2 417.0 700.5 419.5 699.8 422.0 699.0 424.5 698.3 427.0 697.7 429.5 697.0 432.0 696.3 434.5 695.7 437.0 695.1 439.5 694.4 442.0 693.8 444.5 693.2 447.0 692.6 449.5 692.0 452.0 691.4 454.5 690.8 457.0 690.2 459.5 689.7 462.0 689.2 464.5 688.7 467.0 688.2 469.5 687.7 472.0 687.3 474.5 686.9 477.0 686.4 479.5 686.0 482.0 685.6 484.5 685.3 487.0 684.9 489.5 684.5 492.0 684.1 494.5 683.7 497.0 683.4 499.5 683.0 502.0 682.7 504.5 682.4 507.0 682.1 509.5 681.7 512.0 681.4 514.5 681.1 517.0 680.8 519.5 680.6 522.0 680.3 524.5 680.0 527.0 679.8 529.5 679.6 532.0 679.3 534.5 679.1 537.0 678.9 539.5 678.7 542.0 678.5 544.5 678.3 547.0 678.2 549.5 678.0 552.0 677.9 554.5 677.8 557.0 677.7 559.5 677.5 562.0 677.4 564.5 677.4 567.0 677.3 569.5 677.2 572.0 677.1 574.5 677.0 577.0 676.9 579.5 676.9 582.0 676.8 584.5 676.7 587.0 676.7 589.5 676.6 592.0 676.5 594.5 676.5 597.0 676.4 599.5 676.4 602.0 676.4 604.5 676.4 607.0 676.3 609.5 676.3 612.0 676.3 614.5 676.3 617.0 676.3 619.5 676.2 622.0 676.2 624.5 676.2 627.0 676.2 629.5 676.2 632.0 676.2 634.5 676.2 637.0 676.1 639.5 676.1 642.0 676.1 644.5 676.1 647.0 676.1 649.5 676.1 652.0 676.1 654.5 676.1 657.0 676.1 659.5 676.1 662.0 676.1 664.5 676.1 667.0 676.1 669.5 676.0 672.0 676.0 674.5 676.0 677.0 676.0 679.5 676.0 682.0 676.0 684.5 676.0 687.0 676.0 689.5 676.0 692.0 676.0 694.5 676.0 697.0 676.0 699.5 676.0 702.0 676.0 704.5 676.0 707.0 676.0 709.5 676.0 712.0 676.0 714.5 676.0 717.0 676.0 719.5 676.0 722.0 676.0 724.5 676.0 727.0 676.0 729.5 676.0 732.0 676.0 734.5 676.0 737.0 676.0 739.5 676.0 742.0 676.0 744.5 676.0 747.0 676.0 749.5 676.0 752.0 676.0 754.5 676.0 757.0 676.0 759.5 676.0 762.0 676.0 764.5 676.0 767.0 676.0 769.5 676.0 772.0 676.0 774.5 676.0 777.0 676.0 779.5 676.0 782.0 676.0 784.5 676.0 787.0 676.0 789.5 676.0 792.0 676.0 794.5 676.0 797.0 676.0 799.5 676.0 802.0 676.0 804.5 676.0 807.0 676.0 809.5 676.0 812.0 676.0 814.5 676.0 817.0 676.0 819.5 676.0 822.0 676.0 824.5 676.0 827.0 676.0 829.5 676.0 832.0 676.0 834.5 676.0 837.0 676.0 839.5 676.0 842.0 676.0 844.5 676.0 847.0 676.0 849.5 676.0 852.0 676.0 854.5 676.0 857.0 676.0 859.5 676.0 862.0 676.0 864.5 676.0 867.0 676.0 869.5 676.0 872.0 676.0 874.5 676.0 877.0 676.0 879.5 676.0 882.0 676.0 884.5 676.0 887.0 676.0 889.5 676.0 892.0 676.0 894.5 676.0 897.0 676.0 899.5 676.0 902.0 676.0 904.5 676.0 907.0 676.0 909.5 676.0 912.0 676.0 914.5 676.0 917.0 676.0 919.5 676.1 922.0 676.1 924.5 676.1 927.0 676.1 929.5 676.1 932.0 676.1 934.5 676.2 937.0 676.2 939.5 676.2 942.0 676.2 944.5 676.2 947.0 676.3 949.5 676.3 952.0 676.3 954.5 676.3 957.0 676.4 959.5 676.4 962.0 676.4 964.5 676.5 967.0 676.5 969.5 676.6 972.0 676.6 974.5 676.7 977.0 676.7 979.5 676.8 982.0 676.8 984.5 676.9 987.0 676.9 989.5 677.0 992.0 677.1 994.5 677.1 997.0 677.2 999.5 677.3 1002.0 677.4 1004.5 677.5 1007.0 677.6 1009.5 677.8 1012.0 677.9 1014.5 678.1 1017.0 678.4 1019.5 678.6 1022.0 678.9 1024.5 679.1 1027.0 679.4 1029.5 679.7 1032.0 680.0 1034.5 680.3 1037.0 680.6 1039.5 680.8 1042.0 681.1 1044.5 681.4 1047.0 681.7 1049.5 682.1 1052.0 682.4 1054.5 682.7 1057.0 683.1 1059.5 683.5 1062.0 683.9 1064.5 684.3 1067.0 684.8 1069.5 685.3 1072.0 685.8 1074.5 686.3 1077.0 686.9 1079.5 687.4 1082.0 687.9 1084.5 688.5 1087.0 689.0 1089.5 689.5 1092.0 690.1 1094.5 690.6 1097.0 691.2 1099.5 691.7 1102.0 692.3 1104.5 692.9 1107.0 693.5 1109.5 694.1 1112.0 694.7 1114.5 695.3 1117.0 695.9 1119.5 696.5 1122.0 697.2 1124.5 697.8 1127.0 698.5 1129.5 699.2 1132.0 699.9 1134.5 700.6 1137.0 701.3 1139.5 702.0 1142.0 702.7 1144.5 703.5 1147.0 704.2 1149.5 705.0 1152.0 705.7 1154.5 706.5 1157.0 707.3 1159.5 708.1 1162.0 708.9 1164.5 709.7 1167.0 710.6 1169.5 711.5 1172.0 712.4 1174.5 713.3 1177.0 714.2 1179.5 715.1 1182.0 716.1 1184.5 717.0 1187.0 718.0 1189.5 719.0 1192.0 719.9 1194.5 720.9 1197.0 721.9 1199.5 722.9 1202.0 723.9 1204.5 724.9 1207.0 725.9 1209.5 726.9 1212.0 727.9 1214.5 728.9 1217.0 730.0 1219.5 731.0 1222.0 732.1 1224.5 733.1 1227.0 734.2 1229.5 735.3 1232.0 736.3 1234.5 737.4 1237.0 738.5 1239.5 739.6 1242.0 740.6 1244.5 741.7 1247.5 743.0" stroke="#0808B8" stroke-width="2" fill="none"/>
<path d="M309.5 850.2 312.0 849.1 314.5 848.0 317.0 847.0 319.5 845.9 322.0 844.8 324.5 843.7 327.0 842.6 329.5 841.6 332.0 840.6 334.5 839.6 337.0 838.6 339.5 837.7 342.0 836.7 344.5 835.8 347.0 834.9 349.5 834.0 352.0 833.1 354.5 832.1 357.0 831.2 359.5 830.3 362.0 829.4 364.5 828.4 367.0 827.5 369.5 826.5 372.0 825.6 374.5 824.7 377.0 823.8 379.5 822.9 382.0 822.1 384.5 821.3 387.0 820.6 389.5 819.8 392.0 819.1 394.5 818.3 397.0 817.6 399.5 816.9 402.0 816.1 404.5 815.3 407.0 814.6 409.5 813.8 412.0 813.1 414.5 812.3 417.0 811.6 419.5 810.9 422.0 810.1 424.5 809.4 427.0 808.8 429.5 808.1 432.0 807.4 434.5 806.8 437.0 806.2 439.5 805.5 442.0 804.9 444.5 804.3 447.0 803.7 449.5 803.1 452.0 802.5 454.5 801.9 457.0 801.3 459.5 800.8 462.0 800.3 464.5 799.8 467.0 799.3 469.5 798.8 472.0 798.4 474.5 798.0 477.0 797.5 479.5 797.1 482.0 796.7 484.5 796.4 487.0 796.0 489.5 795.6 492.0 795.2 494.5 794.8 497.0 794.5 499.5 794.1 502.0 793.8 504.5 793.5 507.0 793.2 509.5 792.8 512.0 792.5 514.5 792.2 517.0 791.9 519.5 791.7 522.0 791.4 524.5 791.1 527.0 790.9 529.5 790.7 532.0 790.4 534.5 790.2 537.0 790.0 539.5 789.8 542.0 789.6 544.5 789.4 547.0 789.3 549.5 789.1 552.0 789.0 554.5 788.9 557.0 788.8 559.5 788.6 562.0 788.5 564.5 788.5 567.0 788.4 569.5 788.3 572.0 788.2 574.5 788.1 577.0 788.0 579.5 788.0 582.0 787.9 584.5 787.8 587.0 787.8 589.5 787.7 592.0 787.6 594.5 787.6 597.0 787.5 599.5 787.5 602.0 787.5 604.5 787.5 607.0 787.4 609.5 787.4 612.0 787.4 614.5 787.4 617.0 787.4 619.5 787.3 622.0 787.3 624.5 787.3 627.0 787.3 629.5 787.3 632.0 787.3 634.5 787.3 637.0 787.2 639.5 787.2 642.0 787.2 644.5 787.2 647.0 787.2 649.5 787.2 652.0 787.2 654.5 787.2 657.0 787.2 659.5 787.2 662.0 787.2 664.5 787.2 667.0 787.2 669.5 787.1 672.0 787.1 674.5 787.1 677.0 787.1 679.5 787.1 682.0 787.1 684.5 787.1 687.0 787.1 689.5 787.1 692.0 787.1 694.5 787.1 697.0 787.1 699.5 787.1 702.0 787.1 704.5 787.1 707.0 787.1 709.5 787.1 712.0 787.1 714.5 787.1 717.0 787.1 719.5 787.1 722.0 787.1 724.5 787.1 727.0 787.1 729.5 787.1 732.0 787.1 734.5 787.1 737.0 787.1 739.5 787.1 742.0 787.1 744.5 787.1 747.0 787.1 749.5 787.1 752.0 787.1 754.5 787.1 757.0 787.1 759.5 787.1 762.0 787.1 764.5 787.1 767.0 787.1 769.5 787.1 772.0 787.1 774.5 787.1 777.0 787.1 779.5 787.1 782.0 787.1 784.5 787.1 787.0 787.1 789.5 787.1 792.0 787.1 794.5 787.1 797.0 787.1 799.5 787.1 802.0 787.2 804.5 787.2 807.0 787.2 809.5 787.2 812.0 787.2 814.5 787.2 817.0 787.2 819.5 787.2 822.0 787.2 824.5 787.2 827.0 787.2 829.5 787.2 832.0 787.2 834.5 787.2 837.0 787.2 839.5 787.2 842.0 787.2 844.5 787.2 847.0 787.2 849.5 787.2 852.0 787.2 854.5 787.2 857.0 787.2 859.5 787.2 862.0 787.2 864.5 787.2 867.0 787.2 869.5 787.2 872.0 787.2 874.5 787.2 877.0 787.2 879.5 787.2 882.0 787.2 884.5 787.3 887.0 787.3 889.5 787.3 892.0 787.3 894.5 787.3 897.0 787.3 899.5 787.3 902.0 787.3 904.5 787.3 907.0 787.3 909.5 787.3 912.0 787.4 914.5 787.4 917.0 787.4 919.5 787.4 922.0 787.4 924.5 787.4 927.0 787.5 929.5 787.5 932.0 787.5 934.5 787.5 937.0 787.6 939.5 787.6 942.0 787.6 944.5 787.7 947.0 787.7 949.5 787.8 952.0 787.9 954.5 787.9 957.0 788.0 959.5 788.1 962.0 788.2 964.5 788.3 967.0 788.4 969.5 788.5 972.0 788.6 974.5 788.8 977.0 788.9 979.5 789.0 982.0 789.1 984.5 789.2 987.0 789.4 989.5 789.5 992.0 789.6 994.5 789.7 997.0 789.8 999.5 790.0 1002.0 790.1 1004.5 790.2 1007.0 790.4 1009.5 790.5 1012.0 790.6 1014.5 790.8 1017.0 791.0 1019.5 791.1 1022.0 791.3 1024.5 791.5 1027.0 791.6 1029.5 791.8 1032.0 792.0 1034.5 792.2 1037.0 792.5 1039.5 792.7 1042.0 792.9 1044.5 793.2 1047.0 793.4 1049.5 793.7 1052.0 794.0 1054.5 794.3 1057.0 794.6 1059.5 794.9 1062.0 795.2 1064.5 795.6 1067.0 796.0 1069.5 796.4 1072.0 796.9 1074.5 797.3 1077.0 797.8 1079.5 798.2 1082.0 798.7 1084.5 799.2 1087.0 799.7 1089.5 800.1 1092.0 800.6 1094.5 801.1 1097.0 801.6 1099.5 802.2 1102.0 802.7 1104.5 803.2 1107.0 803.7 1109.5 804.3 1112.0 804.8 1114.5 805.4 1117.0 806.0 1119.5 806.6 1122.0 807.2 1124.5 807.8 1127.0 808.4 1129.5 809.1 1132.0 809.7 1134.5 810.4 1137.0 811.0 1139.5 811.6 1142.0 812.3 1144.5 812.9 1147.0 813.5 1149.5 814.1 1152.0 814.8 1154.5 815.4 1157.0 816.0 1159.5 816.7 1162.0 817.3 1164.5 817.9 1167.0 818.5 1169.5 819.1 1172.0 819.7 1174.5 820.2 1177.0 820.8 1179.5 821.4 1182.0 822.0 1184.5 822.5 1187.0 823.1 1189.5 823.6 1192.0 824.2 1194.5 824.7 1197.0 825.3 1199.5 825.9 1202.0 826.4 1204.5 826.9 1207.0 827.5 1209.5 828.0 1212.0 828.5 1214.5 828.9 1217.0 829.3 1219.5 829.7 1222.0 830.1 1224.5 830.5 1227.0 830.9 1229.5 831.2 1232.0 831.6 1234.5 831.9 1237.0 832.3 1239.5 832.6 1242.0 832.9 1244.5 833.2 1247.5 833.6" stroke="#087008" stroke-width="2" fill="none"/>
<text x="302.5" y="552.3" text-anchor="end">50.00 dB</text>
<text x="302.5" y="589.3" text-anchor="end">40.00 dB</text>
<text x="302.5" y="626.3" text-anchor="end">30.00 dB</text>
<text x="302.5" y="664.3" text-anchor="end">20.00 dB</text>
<text x="302.5" y="701.3" text-anchor="end">10.00 dB</text>
<text x="302.5" y="738.3" text-anchor="end">0.000 dB</text>
<text x="302.5" y="775.3" text-anchor="end">-10.00 dB</text>
<text x="302.5" y="812.3" text-anchor="end">-20.00 dB</text>
<text x="302.5" y="850.3" text-anchor="end">-30.00 dB</text>
<text x="302.5" y="887.3" text-anchor="end">-40.00 dB</text>
<text x="302.5" y="924.3" text-anchor="end">-50.00 dB</text>
<text x="310.0" y="936" text-anchor="middle">1.000 Hz</text>
<text x="497.6" y="936" text-anchor="middle">10.00 Hz</text>
<text x="685.2" y="936" text-anchor="middle">100.0 Hz</text>
<text x="872.8" y="936" text-anchor="middle">1.000kHz</text>
<text x="1060.4" y="936" text-anchor="middle">10.00kHz</text>
<text x="1248.0" y="936" text-anchor="middle">100.0kHz</text>
<g font-size="11"><text x="186" y="559" fill="#E02828">A: c5_2</text><text x="186" y="575" fill="#1C1CB8">B: q1_1</text><text x="186" y="591" fill="#1C7C1C">C: c4_2</text></g></svg>
<svg class="abs" style="left:176px;top:951px" width="1102" height="21" viewBox="176 951 1102 21" font-family="Liberation Sans,sans-serif" font-size="12">
<defs><pattern id="dith2" width="2" height="2" patternUnits="userSpaceOnUse"><rect width="2" height="2" fill="#fff"/><rect width="1" height="1" fill="#ECE9D8"/><rect x="1" y="1" width="1" height="1" fill="#ECE9D8"/></pattern></defs><path d="M176 955.5H1278" stroke="#000" stroke-width="1.6"/>
<path d="M254 955.5H334.500L330.500 970.500H250.500z" fill="#fff"/><path d="M254.200 956.500L251 970.500H330.500L334.500 955.500" fill="none" stroke="#000"/>
<path d="M337 955.5H428L424 970.500H333.500z" fill="#fff"/><path d="M337.200 956.500L334 970.500H424L428 955.500" fill="none" stroke="#000"/>
<path d="M184 954.6H252L247.5 970.5H189z" fill="url(#dith2)"/><path d="M176 955.5H184.5L189 970.5H247.5L252 955.5" fill="none" stroke="#000" stroke-width="1.3"/>
<text x="190" y="966.6" textLength="54.5" lengthAdjust="spacingAndGlyphs">AC Analysis</text>
<text x="255.3" y="966.6" textLength="72" lengthAdjust="spacingAndGlyphs">Operating Point</text>
<text x="337" y="966.6" textLength="83.5" lengthAdjust="spacingAndGlyphs">Transient Analysis</text>
</svg>
</div>
<!-- STATUS + TASKBAR -->
<div id="status"><div class="abs" style="left:0;top:974px;width:1280px;height:2px;background:#fff"></div>
<div class="abs" style="left:0;top:993px;width:1280px;height:1px;background:#fff"></div>
<div class="abs" style="left:1278px;top:81px;width:2px;height:913px;background:#fff"></div>

<div class="abs" style="left:0;top:977px;width:50px;height:16px;border:1px solid;border-color:#ACA899 #fff #ECE9D8 #ACA899"></div>
<div class="abs" style="left:52px;top:977px;width:1226px;height:16px;border:1px solid;border-color:#ACA899 #fff #ECE9D8 #ACA899"></div>
</div>
<div id="taskbar">
<div class="abs" style="left:0;top:994px;width:1280px;height:30px;background:linear-gradient(#1C4CBC 0,#3A88EE 2px,#2C6AE2 5px,#2258D4 10px,#245CDA 18px,#2866E2 26px,#2460DC 30px)"></div>
<div class="abs" style="left:0;top:994px;width:98px;height:30px;border-radius:0 11px 11px 0;background:linear-gradient(#2A702A 0,#58B058 2px,#3C983C 6px,#348E36 18px,#2C802C 26px,#226422 30px);box-shadow:1px 0 3px #143A90"></div>
<svg class="abs" style="left:10px;top:998px" width="24" height="22" viewBox="0 0 20 18"><path d="M2 3.4c2.2-1.4 4.4-1.4 6.6-.2l-1.4 5c-2.2-1.2-4.4-1.2-6.6.2z" fill="#E8582C"/><path d="M9.8 3.6c2.2 1.2 4.4 1.2 6.8-.2l-1.4 5c-2.4 1.4-4.6 1.4-6.8.2z" fill="#7CC83C"/><path d="M.3 9.6c2.2-1.4 4.4-1.4 6.6-.2l-1.4 5c-2.2-1.2-4.4-1.2-6.6.2z" fill="#4C8CF0"/><path d="M8.2 9.8c2.2 1.2 4.4 1.2 6.8-.2l-1.4 5c-2.4 1.4-4.6 1.4-6.8.2z" fill="#F8C830"/></svg>
<div class="abs" style="left:35px;top:998px;font-size:18px;font-weight:bold;font-style:italic;color:#fff;text-shadow:1px 1px 1px #1C4A1C;letter-spacing:-.3px;line-height:22px">Start</div>
<div class="tk" style="left:108px;width:159px;background:linear-gradient(#5C98FC,#3C80F4 20%,#3676EE 80%,#2C62D8);box-shadow:inset 0 0 0 1px #4C8AF4"><span style="position:absolute;left:30px;letter-spacing:.04px">[7] Fejhallgat&oacute; er&#337;s&iacute;t...</span></div>
<div class="tk" style="left:269px;width:158px;background:linear-gradient(#5C98FC,#3C80F4 20%,#3676EE 80%,#2C62D8);box-shadow:inset 0 0 0 1px #4C8AF4"><span style="position:absolute;left:28px;letter-spacing:-.12px">Stax SRA-3S schemat...</span></div>
<div class="tk" style="left:429px;width:159px;background:linear-gradient(#1848B0,#1E52C0 30%,#2058C8);box-shadow:inset 1px 1px 2px #0E2E80"><span style="position:absolute;left:30px;letter-spacing:-.3px">CircuitMaker</span></div>
<svg class="abs" style="left:117px;top:1001px" width="17" height="17" viewBox="0 0 16 16"><defs><radialGradient id="gl117" cx=".35" cy=".3" r=".8"><stop offset="0" stop-color="#8CB4F8"/><stop offset=".5" stop-color="#3C54C8"/><stop offset="1" stop-color="#28208C"/></radialGradient></defs><circle cx="8" cy="8" r="7.2" fill="url(#gl117)"/><path d="M10.2 1C14.6 2.2 16.300 6.500 15.200 10.200C13.900 14.300 9.500 16.200 5.500 14.900C2.700 13.900.8 11.300.7 8.200C1.900 10.400 4 11.600 6.500 11.300C9.800 10.800 12.300 8.400 11.900 5.400C11.700 3.700 11.200 2.300 10.200 1z" fill="#E8681C"/><path d="M.7 8.200C1.900 10.400 4 11.600 6.500 11.300C8.500 11 10 10 11 8.600C10.500 12 7.500 14 4.800 13.400C2.500 12.600 1 10.600.7 8.200z" fill="#F8B030"/><path d="M1.200 5.500C1.800 3.500 3.200 2.200 5 1.600C4 2.800 3.800 4 4.200 5C3.200 5 2 5.200 1.200 5.500z" fill="#F09020"/></svg>
<svg class="abs" style="left:277px;top:1001px" width="17" height="17" viewBox="0 0 16 16"><defs><radialGradient id="gl277" cx=".35" cy=".3" r=".8"><stop offset="0" stop-color="#8CB4F8"/><stop offset=".5" stop-color="#3C54C8"/><stop offset="1" stop-color="#28208C"/></radialGradient></defs><circle cx="8" cy="8" r="7.2" fill="url(#gl277)"/><path d="M10.2 1C14.6 2.2 16.300 6.500 15.200 10.200C13.900 14.300 9.500 16.200 5.500 14.900C2.700 13.900.8 11.300.7 8.200C1.900 10.400 4 11.600 6.500 11.300C9.800 10.800 12.300 8.400 11.900 5.400C11.700 3.700 11.200 2.300 10.200 1z" fill="#E8681C"/><path d="M.7 8.200C1.900 10.400 4 11.600 6.500 11.300C8.500 11 10 10 11 8.600C10.500 12 7.500 14 4.800 13.400C2.500 12.600 1 10.600.7 8.200z" fill="#F8B030"/><path d="M1.200 5.500C1.800 3.500 3.200 2.200 5 1.600C4 2.800 3.800 4 4.200 5C3.200 5 2 5.200 1.200 5.500z" fill="#F09020"/></svg>
<svg class="abs" style="left:439px;top:1001px" width="16" height="16" viewBox="0 0 16 16"><rect width="16" height="16" fill="#F4D8EC"/><rect x="1" y="1" width="14" height="14" fill="#fff" opacity=".7"/><path d="M2 4h8M4 2v9M7 4v6h4" stroke="#802020" stroke-width="1.3" fill="none"/><circle cx="12" cy="4" r="2.3" fill="#D02020"/><circle cx="12.3" cy="11.5" r="2.3" fill="#2030C0"/><circle cx="4.500" cy="12" r="2.3" fill="#20A040"/></svg>
<div class="abs" style="left:1133px;top:994px;width:147px;height:30px;background:linear-gradient(#0C6CCC 0,#1C9CF4 2px,#189AF0 5px,#1490EA 20px,#1080DC 27px,#0C60B0 30px);box-shadow:inset 1px 0 0 #0A4CA8, inset 2px 0 0 #3CB0F8"></div>
<div class="abs" style="left:1098px;top:1003px;color:#fff;font-size:11px;line-height:13px">HU</div>
<div class="abs" style="left:1239px;top:1003px;color:#fff;font-size:11px;line-height:13px">17:39</div>
<svg class="abs" style="left:1142px;top:1000px" width="92" height="20" viewBox="1142 1000 92 20">
<g><path d="M1147.500 1015.500l11-11.500v11.500z" fill="#3040D0"/><path d="M1147.500 1015.500l11-11.500v3l-8.200 8.500z" fill="#D03030"/><path d="M1150.300 1015.500l8.200-8.500v3l-5.300 5.500z" fill="#E8D020"/><path d="M1153.200 1015.500l5.300-5.500v2.800l-2.600 2.700z" fill="#30A030"/><path d="M1147 1016.300h12.500" stroke="#101030" stroke-width="1.600"/><path d="M1144.800 1013l3.400-2.200v4.200z" fill="#C8C8D8"/></g>
<g><path d="M1163.800 1002.800h11.600v6c0 4-3.200 6-5.800 7c-2.600-1-5.800-3-5.800-7z" fill="#D82020" stroke="#F0F0F0" stroke-width="1"/><path d="M1167.200 1006.400l4.800 4.800M1172 1006.400l-4.800 4.800" stroke="#fff" stroke-width="1.700"/></g>
<g><path d="M1181 1007h4l5-4v14l-5-4h-4z" fill="#E8A868" stroke="#603010" stroke-width=".8"/><path d="M1192 1005c2 3 2 7 0 10M1194.500 1003c3 4 3 10 0 14" stroke="#202020" fill="none" stroke-width="1.2"/></g>
<g><circle cx="1204" cy="1008" r="5.4" fill="#A8A8A8" stroke="#404040"/><circle cx="1203" cy="1007" r="2.400" fill="#E8E8E8"/><path d="M1207 1013l5 4" stroke="#D8D8D8" stroke-width="2.4"/></g>
<g><ellipse cx="1223.500" cy="1010" rx="5.6" ry="8" fill="#1828C8" stroke="#0A1470"/><path d="M1220.500 1006.500l6 6l-3 3v-11l3 3l-6 6" stroke="#E03030" fill="none" stroke-width="1.2"/></g>
</svg>
</div>
</body></html>
